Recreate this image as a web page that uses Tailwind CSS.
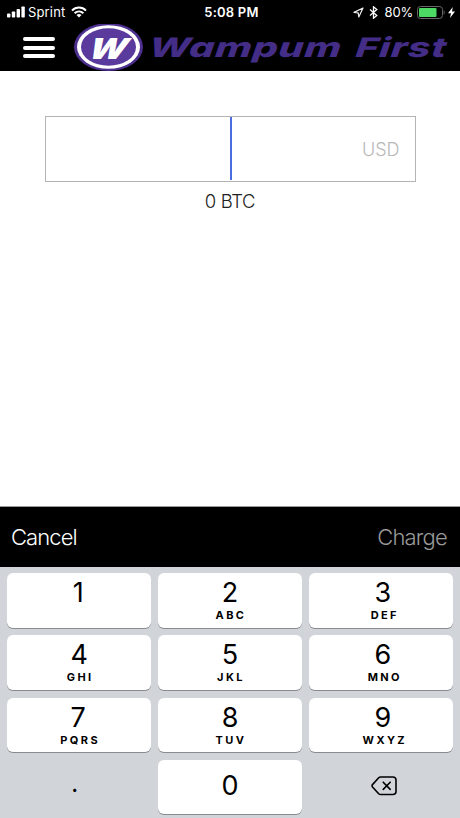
<!DOCTYPE html>
<html lang="en">
<head>
  <meta charset="UTF-8">
  <meta name="viewport" content="width=device-width, initial-scale=1.0">
  <title>Wampum First</title>
  <script src="https://cdn.jsdelivr.net/npm/@tailwindcss/browser@4"></script>
</head>
<body class="h-[818px] w-[460px] overflow-hidden bg-white font-['Inter','Liberation_Sans',sans-serif] text-black flex flex-col">

  <header class="h-[71px] shrink-0 bg-black">
    <!-- Status bar -->
    <div class="h-6 grid grid-cols-3 items-center text-white text-[13px] leading-6">
      <div class="flex items-center pl-[7px]">
        <svg class="w-[18px] h-3" viewBox="0 0 18 12" fill="#fff">
          <rect x="0" y="7.5" width="3.4" height="4" rx="0.8"/>
          <rect x="4.8" y="5.5" width="3.4" height="6" rx="0.8"/>
          <rect x="9.6" y="3" width="3.4" height="8.5" rx="0.8"/>
          <rect x="14.4" y="0.5" width="3.4" height="11" rx="0.8"/>
        </svg>
        <span class="ml-[3px] tracking-[0.15px]">Sprint</span>
        <svg class="ml-[6px] w-4 h-3" viewBox="0 0 16 12" fill="none" stroke="#fff" stroke-width="2">
          <path d="M1 4.6C5 .6 11 .6 15 4.6"/>
          <path d="M3.6 7.3C6.2 4.8 9.8 4.8 12.4 7.3"/>
          <path d="M8 11.5L5.5 9C7 7.7 9 7.7 10.5 9Z" fill="#fff" stroke="none"/>
        </svg>
      </div>
      <div class="text-center font-semibold tracking-[0.2px] pl-[3px]">5:08 PM</div>
      <div class="flex items-center justify-end pr-[5px]">
        <svg class="w-[11px] h-[11px]" viewBox="0 0 11 11" fill="none" stroke="#eee" stroke-width="1.2" stroke-linejoin="round">
          <path d="M10 1L1 5.4L5.2 5.8L5.8 10Z"/>
        </svg>
        <svg class="ml-[5px] w-[9px] h-[13px]" viewBox="0 0 9 13" fill="none" stroke="#fff" stroke-width="1.3">
          <path d="M1 3.6L7.8 9.4L4.5 12.2V.8L7.8 3.6L1 9.4"/>
        </svg>
        <span class="ml-[7px] tracking-[-0.2px]">80%</span>
        <svg class="ml-1 w-[28px] h-[13px]" viewBox="0 0 28 13">
          <rect x=".5" y=".5" width="25" height="12" rx="3" fill="none" stroke="#666"/>
          <rect x="2" y="2" width="17.5" height="9" rx="1" fill="#4cd964"/>
          <path d="M26.7 4.3C28 4.8 28 8.2 26.7 8.7Z" fill="#666"/>
        </svg>
        <svg class="ml-[3px] w-[7px] h-[11px]" viewBox="0 0 7 11" fill="#fff">
          <path d="M4.8 0L0 6.2H3L2 11L7 4.6H4Z"/>
        </svg>
      </div>
    </div>

    <!-- Menu and brand -->
    <div class="h-[47px] flex items-center pl-[23px]">
      <button class="w-8 h-[21px] flex flex-col justify-between" aria-label="Menu">
        <span class="h-1 rounded-full bg-white"></span>
        <span class="h-1 rounded-full bg-white"></span>
        <span class="h-1 rounded-full bg-white"></span>
      </button>
      <svg class="ml-[19px] w-[376px] h-[47px]" viewBox="0 0 376 47">
        <ellipse cx="34.5" cy="23" rx="34.5" ry="24" fill="#4c2f8e"/>
        <ellipse cx="34.5" cy="23" rx="31.5" ry="21.8" fill="#fff"/>
        <ellipse cx="34.5" cy="23" rx="27.5" ry="18.8" fill="#5a3a9c"/>
        <g font-family="Inter, sans-serif" font-style="italic">
          <text transform="translate(13 34.5) skewX(-14)" font-weight="900" font-size="29" textLength="38" lengthAdjust="spacingAndGlyphs" fill="#fff">W</text>
          <g font-weight="800" font-size="27" letter-spacing="0.5" fill="#432d86">
            <text transform="translate(74 33) skewX(-6)" textLength="193" lengthAdjust="spacingAndGlyphs">Wampum</text>
            <text transform="translate(281 33) skewX(-6)" textLength="91" lengthAdjust="spacingAndGlyphs">First</text>
          </g>
        </g>
      </svg>
    </div>
  </header>

  <!-- Amount -->
  <main class="flex-1 px-11 pt-[45px]">
    <div class="w-[371px] h-[66px] ml-[0.5px] border border-[#b4b4b4] flex items-center justify-end pr-[15px] relative">
      <span class="absolute left-[184px] top-0 w-[2px] h-[63px] bg-[#4a6ee0]"></span>
      <span class="pt-[2px] text-lg font-light text-[#b8b8b8]">USD</span>
    </div>
    <p class="mt-[5px] text-center text-[18.5px] leading-7 font-light tracking-[-0.4px] text-[#222]">0 BTC</p>
  </main>

  <!-- Input toolbar -->
  <div class="h-[61px] shrink-0 bg-black border-t border-[#999] flex items-center justify-between pl-[11px] pr-[13px] text-[22px] font-light">
    <button class="text-white tracking-[-0.9px]">Cancel</button>
    <button class="text-[#9a9a9a] tracking-[-0.8px]">Charge</button>
  </div>

  <!-- Keypad -->
  <div class="h-[251px] shrink-0 bg-[#d1d5da] px-[7px] pt-[6px] grid grid-cols-3 auto-rows-[54.5px] gap-x-[6.5px] gap-y-[7.8px]">
    <button class="bg-white rounded-[6px] shadow-[0_1px_0_#888b8f] flex flex-col items-center pt-1">
      <span class="text-[27px] leading-[31px] pr-[2px]">1</span>
    </button>
    <button class="bg-white rounded-[6px] shadow-[0_1px_0_#888b8f] flex flex-col items-center pt-1">
      <span class="text-[27px] leading-[31px]">2</span>
      <span class="text-[11px] leading-[14px] font-bold tracking-[2.4px] pl-[2px]">ABC</span>
    </button>
    <button class="bg-white rounded-[6px] shadow-[0_1px_0_#888b8f] flex flex-col items-center pt-1">
      <span class="text-[27px] leading-[31px] pl-[4px]">3</span>
      <span class="text-[11px] leading-[14px] font-bold tracking-[2.4px] pl-[8px]">DEF</span>
    </button>
    <button class="bg-white rounded-[6px] shadow-[0_1px_0_#888b8f] flex flex-col items-center pt-1">
      <span class="text-[27px] leading-[31px]">4</span>
      <span class="text-[11px] leading-[14px] font-bold tracking-[2.4px] pl-[2px]">GHI</span>
    </button>
    <button class="bg-white rounded-[6px] shadow-[0_1px_0_#888b8f] flex flex-col items-center pt-1">
      <span class="text-[27px] leading-[31px]">5</span>
      <span class="text-[11px] leading-[14px] font-bold tracking-[2.4px] pl-[2px]">JKL</span>
    </button>
    <button class="bg-white rounded-[6px] shadow-[0_1px_0_#888b8f] flex flex-col items-center pt-1">
      <span class="text-[27px] leading-[31px] pl-[4px]">6</span>
      <span class="text-[11px] leading-[14px] font-bold tracking-[2.4px] pl-[8px]">MNO</span>
    </button>
    <button class="bg-white rounded-[6px] shadow-[0_1px_0_#888b8f] flex flex-col items-center pt-1">
      <span class="text-[27px] leading-[31px] pr-[2px]">7</span>
      <span class="text-[11px] leading-[14px] font-bold tracking-[2.4px] pl-[2px]">PQRS</span>
    </button>
    <button class="bg-white rounded-[6px] shadow-[0_1px_0_#888b8f] flex flex-col items-center pt-1">
      <span class="text-[27px] leading-[31px]">8</span>
      <span class="text-[11px] leading-[14px] font-bold tracking-[2.4px] pl-[2px]">TUV</span>
    </button>
    <button class="bg-white rounded-[6px] shadow-[0_1px_0_#888b8f] flex flex-col items-center pt-1">
      <span class="text-[27px] leading-[31px] pl-[4px]">9</span>
      <span class="text-[11px] leading-[14px] font-bold tracking-[2.4px] pl-[8px]">WXYZ</span>
    </button>
    <button class="flex items-center justify-center text-[24px] leading-[30px] pr-[9px] pb-[7px]">.</button>
    <button class="bg-white rounded-[6px] shadow-[0_1px_0_#888b8f] flex items-center justify-center text-[27px] leading-[30px] pb-[2px]">0</button>
    <button class="flex items-center justify-center pl-[6px] pb-[2px]" aria-label="Delete">
      <svg class="w-[26px] h-5" viewBox="0 0 26 20" fill="none" stroke="#000" stroke-width="1.6" stroke-linecap="round" stroke-linejoin="round">
        <path d="M9.5 1H21.8Q25 1 25 4V15.5Q25 18.5 21.8 18.5H9.5Q8.5 18.5 7.7 17.7L1.5 11Q.6 9.8 1.5 8.6L7.7 1.8Q8.5 1 9.5 1Z"/>
        <path d="M12.2 6.2L19.2 13.4M19.2 6.2L12.2 13.4"/>
      </svg>
    </button>
  </div>

</body>
</html>
